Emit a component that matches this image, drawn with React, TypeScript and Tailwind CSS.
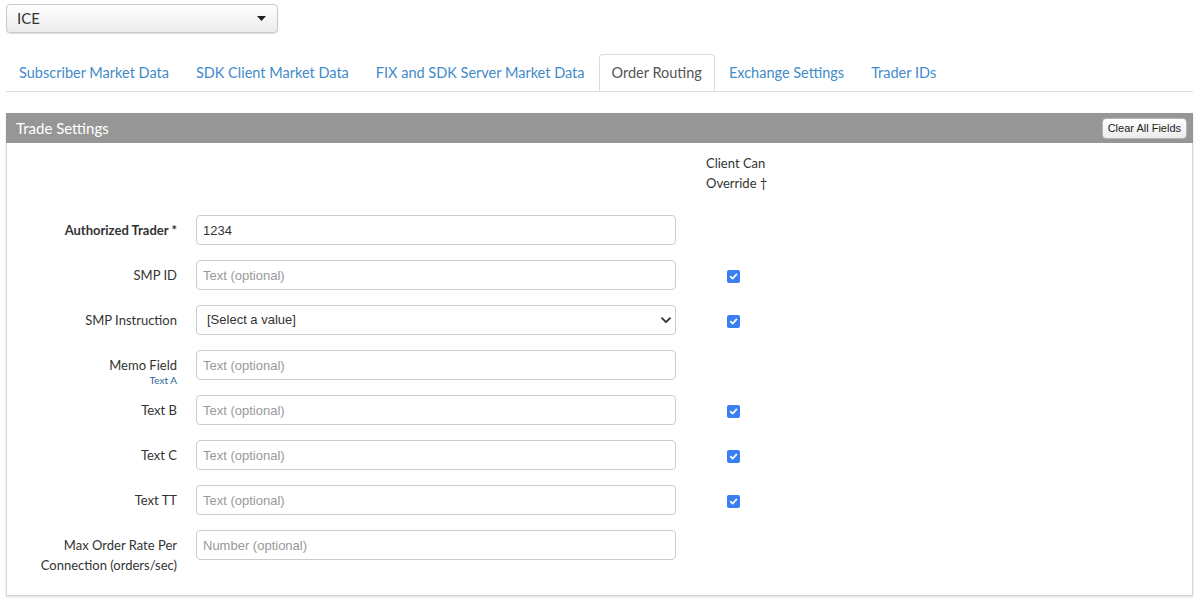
import React from "react";

const font = { fontFamily: "Lato, 'Noto Sans', sans-serif" };

function Check() {
  return (
    <div className="w-[13px] h-[13px] rounded-[2px] bg-[#3a7ff2] flex items-center justify-center">
      <svg width="9" height="9" viewBox="0 0 10 10">
        <path d="M1.8 5.2 L4 7.4 L8.3 2.6" fill="none" stroke="white" strokeWidth="1.9" strokeLinecap="round" strokeLinejoin="round" />
      </svg>
    </div>
  );
}

type Row = {
  label: string;
  sub?: string;
  bold?: boolean;
  value?: string;
  placeholder?: string;
  select?: boolean;
  check?: boolean;
  twoLine?: boolean;
};

const rows: Row[] = [
  { label: "Authorized Trader *", bold: true, value: "1234" },
  { label: "SMP ID", placeholder: "Text (optional)", check: true },
  { label: "SMP Instruction", select: true, check: true },
  { label: "Memo Field", sub: "Text A", placeholder: "Text (optional)" },
  { label: "Text B", placeholder: "Text (optional)", check: true },
  { label: "Text C", placeholder: "Text (optional)", check: true },
  { label: "Text TT", placeholder: "Text (optional)", check: true },
  { label: "Max Order Rate Per Connection (orders/sec)", placeholder: "Number (optional)", twoLine: true },
];

const tabs = [
  "Subscriber Market Data",
  "SDK Client Market Data",
  "FIX and SDK Server Market Data",
  "Order Routing",
  "Exchange Settings",
  "Trader IDs",
];

export default function App() {
  return (
    <div className="w-[1198px] h-[599px] bg-white overflow-hidden pl-[6px] pr-[5px] pt-[4px]" style={font}>
      {/* top dropdown */}
      <div className="w-[272px] h-[29px] rounded-[4px] border border-[#c8c8c8] bg-gradient-to-b from-[#ffffff] to-[#ececec] shadow-[0_1px_1px_rgba(0,0,0,0.12)] flex items-center justify-between pl-[10px] pr-[11px]">
        <span className="text-[15px] text-[#333]">ICE</span>
        <svg width="9" height="5" viewBox="0 0 9 5">
          <path d="M0 0 L9 0 L4.5 5 Z" fill="#222" />
        </svg>
      </div>

      {/* tabs */}
      <div className="mt-[21px] flex border-b border-[#dddddd]">
        {tabs.map((t) => {
          const active = t === "Order Routing";
          return (
            <div
              key={t}
              className={
                active
                  ? "h-[37px] px-[12px] mr-[1px] -mb-px flex items-center text-[14.5px] text-[#555] bg-white border border-[#dddddd] border-b-white rounded-t-[4px]"
                  : "h-[37px] px-[12px] mr-[1px] flex items-center text-[14.5px] text-[#428bca] border border-transparent"
              }
            >
              {t}
            </div>
          );
        })}
      </div>

      {/* panel */}
      <div className="mt-[21px] shadow-[0_1px_2px_rgba(0,0,0,0.15)]">
        <div className="h-[30px] bg-[#969696] flex items-center justify-between pl-[10px] pr-[6px]">
          <span className="text-[15px] text-white">Trade Settings</span>
          <button
            className="h-[21px] px-[5px] rounded-[4px] border border-[#b5b5b5] bg-gradient-to-b from-[#ffffff] to-[#ececec] text-[11px] text-[#222] leading-none"
            style={{ fontFamily: "'Liberation Sans', Arial, sans-serif" }}
          >
            Clear All Fields
          </button>
        </div>
        <div className="border border-t-0 border-[#d6d6d6] pt-[10px] pb-[20px]">
          {/* header row */}
          <div className="flex">
            <div className="w-[170px]" />
            <div className="w-[480px] ml-[19px]" />
            <div className="ml-[30px] text-[13px] leading-[20px] text-[#333]">
              Client Can
              <br />
              Override †
            </div>
          </div>
          <div className="mt-[22px] flex flex-col gap-[15px]">
            {rows.map((r) => (
              <div key={r.label} className={r.twoLine ? "flex items-start" : "flex items-start h-[30px]"}>
                <div className="w-[170px] pt-[5px] text-right text-[13px] leading-[20px] text-[#333] shrink-0">
                  {r.twoLine ? (
                    <>
                      Max Order Rate Per
                      <br />
                      Connection (orders/sec)
                    </>
                  ) : (
                    <span className={r.bold ? "font-bold" : ""}>{r.label}</span>
                  )}
                  {r.sub && <div className="text-[10px] leading-[10px] text-[#2a6496]">{r.sub}</div>}
                </div>
                <div className="ml-[19px] w-[480px] shrink-0">
                  {r.select ? (
                    <div
                      className="h-[30px] rounded-[4px] border border-[#cccccc] flex items-center justify-between pl-[10px] pr-[4px] text-[13px] text-[#333]"
                      style={{ fontFamily: "'Liberation Sans', Arial, sans-serif" }}
                    >
                      <span>[Select a value]</span>
                      <svg width="10" height="7" viewBox="0 0 10 7">
                        <path d="M1 1.2 L5 5.2 L9 1.2" fill="none" stroke="#333" strokeWidth="1.8" strokeLinecap="round" strokeLinejoin="round" />
                      </svg>
                    </div>
                  ) : (
                    <input
                      readOnly
                      value={r.value ?? ""}
                      placeholder={r.placeholder}
                      className="w-full h-[30px] rounded-[4px] border border-[#cccccc] px-[6px] text-[13px] text-[#333] placeholder:text-[#999] outline-none"
                      style={{ fontFamily: "'Liberation Sans', Arial, sans-serif" }}
                    />
                  )}
                </div>
                <div className="ml-[51px] h-[30px] flex items-center pt-[2px]">{r.check && <Check />}</div>
              </div>
            ))}
          </div>
        </div>
      </div>
    </div>
  );
}
